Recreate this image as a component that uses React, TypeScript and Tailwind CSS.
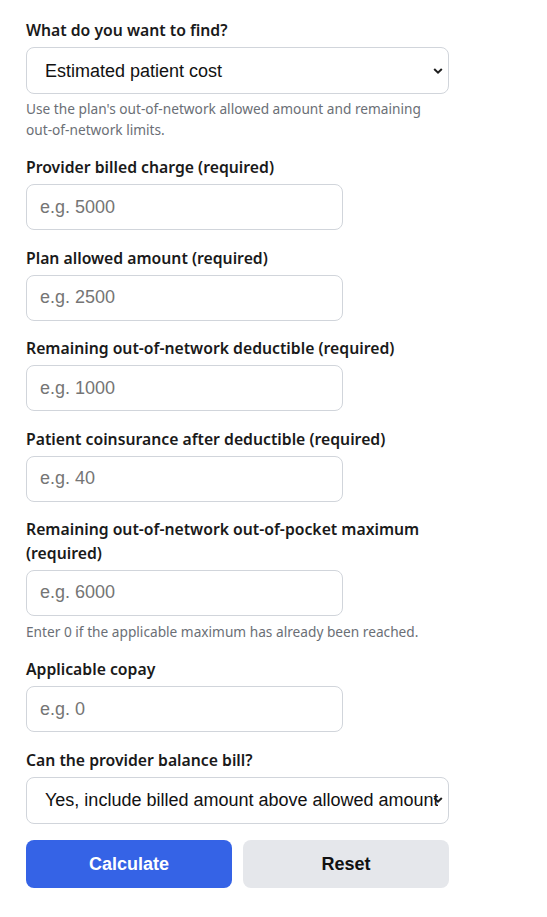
import { useState } from "react";

type Field = {
  id: string;
  label: string;
  placeholder: string;
  hint?: string;
};

const fields: Field[] = [
  { id: "billed", label: "Provider billed charge (required)", placeholder: "e.g. 5000" },
  { id: "allowed", label: "Plan allowed amount (required)", placeholder: "e.g. 2500" },
  { id: "deductible", label: "Remaining out-of-network deductible (required)", placeholder: "e.g. 1000" },
  { id: "coinsurance", label: "Patient coinsurance after deductible (required)", placeholder: "e.g. 40" },
  {
    id: "oop",
    label: "Remaining out-of-network out-of-pocket maximum (required)",
    placeholder: "e.g. 6000",
    hint: "Enter 0 if the applicable maximum has already been reached.",
  },
  { id: "copay", label: "Applicable copay", placeholder: "e.g. 0" },
];

const labelCls = "block mb-[4.5px] text-[15.75px] leading-[1.5] font-semibold text-[#1a1a1a]";
const hintCls = "text-[13.7px] leading-[21px] text-[#6b6f76]";
const controlFont = "font-['Liberation_Sans',Arial,sans-serif] text-lg";

function Select({
  id,
  value,
  onChange,
  options,
}: {
  id: string;
  value: string;
  onChange: (v: string) => void;
  options: { value: string; label: string }[];
}) {
  return (
    <div className="relative">
      <select
        id={id}
        value={value}
        onChange={(e) => onChange(e.target.value)}
        className={`block w-full h-[47px] pl-[18px] pr-[10px] appearance-none rounded-lg border border-[#d1d5db] bg-white text-[#111] outline-none ${controlFont}`}
      >
        {options.map((o) => (
          <option key={o.value} value={o.value}>
            {o.label}
          </option>
        ))}
      </select>
      {/* native-looking chevron */}
      <svg
        className="pointer-events-none absolute right-[6px] top-1/2 -translate-y-1/2"
        width="10"
        height="7"
        viewBox="0 0 10 7"
        fill="none"
      >
        <path d="M1.2 1.5 5 5.2 8.8 1.5" stroke="#1f1f1f" strokeWidth="2" />
      </svg>
    </div>
  );
}

export default function App() {
  const [values, setValues] = useState<Record<string, string>>({});
  const [mode, setMode] = useState("cost");
  const [balance, setBalance] = useState("yes");

  return (
    <div className="min-h-screen bg-white font-['Noto_Sans',sans-serif]">
      <form
        className="w-[423px] ml-[26px] pt-[19px] pb-8"
        onSubmit={(e) => e.preventDefault()}
      >
        <div className="mb-4">
          <label htmlFor="mode" className={labelCls}>
            What do you want to find?
          </label>
          <Select
            id="mode"
            value={mode}
            onChange={setMode}
            options={[
              { value: "cost", label: "Estimated patient cost" },
              { value: "allowed", label: "Plan allowed amount" },
            ]}
          />
          <p className={`mt-1 ${hintCls}`}>
            Use the plan's out-of-network allowed amount and remaining out-of-network limits.
          </p>
        </div>

        {fields.map((f) => (
          <div key={f.id} className="mb-[16.4px]">
            <label htmlFor={f.id} className={labelCls}>
              {f.label}
            </label>
            <input
              id={f.id}
              type="number"
              placeholder={f.placeholder}
              value={values[f.id] ?? ""}
              onChange={(e) => setValues({ ...values, [f.id]: e.target.value })}
              className={`block w-3/4 h-[46px] px-[13px] rounded-lg border border-[#d1d5db] bg-white text-[#111] placeholder:text-[#757575] outline-none ${controlFont}`}
            />
            {f.hint && <p className={`mt-[5px] ${hintCls}`}>{f.hint}</p>}
          </div>
        ))}

        <div className="mb-4">
          <label htmlFor="balance" className={labelCls}>
            Can the provider balance bill?
          </label>
          <Select
            id="balance"
            value={balance}
            onChange={setBalance}
            options={[
              { value: "yes", label: "Yes, include billed amount above allowed amount" },
              { value: "no", label: "No, limit to allowed amount" },
            ]}
          />
        </div>

        <div className="grid grid-cols-2 gap-[11px]">
          <button
            type="submit"
            className={`h-12 rounded-lg bg-[#3563e6] text-white font-bold ${controlFont}`}
          >
            Calculate
          </button>
          <button
            type="button"
            onClick={() => setValues({})}
            className={`h-12 rounded-lg bg-[#e5e7eb] text-[#111] font-bold ${controlFont}`}
          >
            Reset
          </button>
        </div>
      </form>
    </div>
  );
}
